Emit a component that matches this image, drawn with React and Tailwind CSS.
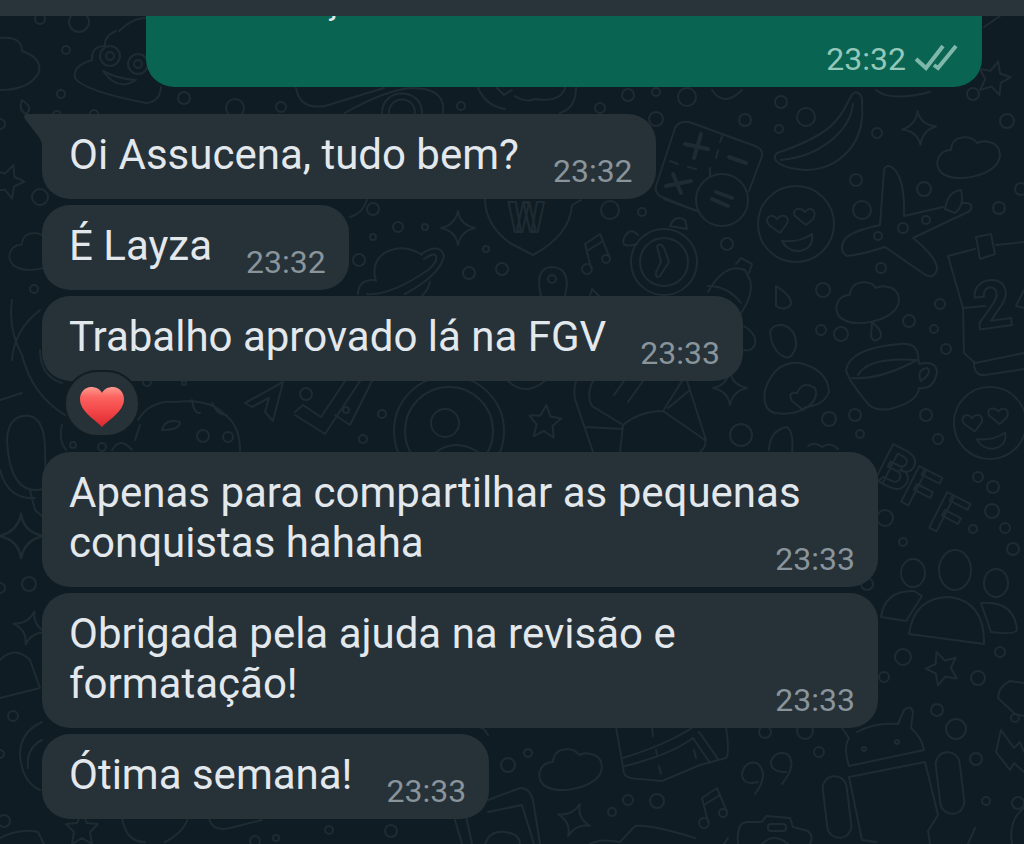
import React from 'react';

const messages = [
  { id: 1, text: 'Oi Assucena, tudo bem?', time: '23:32', tail: true },
  { id: 2, text: 'É Layza', time: '23:32' },
  { id: 3, text: 'Trabalho aprovado lá na FGV', time: '23:33', reaction: true },
  { id: 4, text: 'Apenas para compartilhar as pequenas conquistas hahaha', time: '23:33' },
  { id: 5, text: 'Obrigada pela ajuda na revisão e formatação!', time: '23:33' },
  { id: 6, text: 'Ótima semana!', time: '23:33' },
];

// x, y, radius
const bubbles = [
  [40, 19, 5], [79, 22, 10], [66, 50, 4], [61, 94, 4], [184, 98, 6], [235, 108, 9], [281, 107, 5], [40, 197, 8],
  [461, 106, 4], [94, 114, 4], [57, 115, 4], [0, 124, 5], [628, 95, 6], [656, 92, 4], [687, 97, 9], [600, 108, 5],
  [656, 119, 7], [745, 120, 6], [779, 129, 4], [781, 102, 6], [806, 117, 9], [877, 133, 5], [973, 94, 6],
  [1007, 121, 7], [856, 180, 6], [924, 189, 7], [862, 210, 9], [999, 208, 6], [610, 210, 9], [642, 212, 4],
  [1021, 189, 6], [903, 228, 5], [926, 220, 4], [878, 236, 4], [727, 244, 6], [881, 268, 5], [823, 290, 7],
  [940, 304, 5], [909, 321, 6], [821, 330, 5], [841, 334, 7], [934, 329, 4], [946, 349, 5], [829, 419, 7],
  [855, 415, 6], [860, 434, 4], [741, 435, 11], [926, 415, 6], [938, 439, 5], [978, 477, 5], [993, 487, 6],
  [992, 511, 7], [973, 529, 4], [1005, 528, 5], [885, 518, 8], [373, 209, 6], [398, 227, 5], [425, 227, 3],
  [373, 237, 3], [359, 260, 6], [469, 273, 6], [502, 269, 6], [486, 249, 3], [382, 414, 4], [363, 439, 4],
  [147, 382, 4], [184, 383, 2], [306, 394, 6], [346, 410, 3], [203, 436, 6], [228, 437, 5], [73, 445, 3],
  [102, 447, 4], [29, 584, 7], [0, 588, 5], [903, 542, 4], [1013, 549, 6], [867, 584, 6], [903, 657, 8],
  [1000, 652, 5], [884, 677, 5], [978, 678, 7], [937, 710, 6], [956, 729, 10], [765, 732, 6], [805, 731, 8],
  [819, 752, 5], [976, 759, 6], [986, 801, 4], [1018, 803, 6], [1015, 718, 4], [508, 765, 7], [528, 753, 4],
  [628, 800, 5], [657, 801, 7], [612, 812, 4], [13, 716, 5], [4, 821, 6], [0, 754, 4], [329, 830, 4],
  [391, 831, 6], [255, 841, 5], [276, 838, 3], [34, 289, 4],
];

const Star = ({ at }) => (
  <path transform={at} d="M0-16 5-5 16-4 8 4 10 16 0 10-10 16-8 4-16-4-5-5Z" />
);

const Sparkle = ({ at }) => (
  <path transform={at} d="M0-17Q2-3 17 0Q3 3 0 17Q-2 3-17 0Q-3-3 0-17Z" />
);

const Cloud = ({ at }) => (
  <path
    transform={at}
    d="M-18-6C-34-6-36 14-24 19C-10 26 16 20 26 10C34 2 32-12 20-14C16-15 12-15 8-13C2-22-14-20-17-11Q-18-8-18-6Z"
  />
);

const LoveFace = ({ at }) => (
  <g transform={at}>
    <circle r="38" />
    <path d="M-16 9-27 1C-33-6-24-12-19-5C-14-12-4-7-10 1Z" />
    <path d="M10 1-1-8C-5-15 4-18 9-12C14-19 22-13 17-5Z" />
    <path d="M-14 17Q3 19 16 10Q18 24 4 27Q-8 28-14 17Z" />
  </g>
);

const Note = ({ at }) => (
  <g transform={at}>
    <circle cx="-10" cy="15" r="5" />
    <circle cx="9" cy="5" r="4" />
    <path d="M-6 14-12-10 3-20 13 4M-10-3 6-13" />
  </g>
);

const Wallpaper = () => (
  <svg
    aria-hidden="true"
    className="pointer-events-none absolute inset-0 h-full w-full"
    viewBox="0 0 1024 844"
    preserveAspectRatio="xMinYMin slice"
    fill="none"
    stroke="#1f2b32"
    strokeWidth="2"
    strokeLinecap="round"
    strokeLinejoin="round"
  >
    {bubbles.map(([x, y, r]) => (
      <circle key={`${x}-${y}`} cx={x} cy={y} r={r} />
    ))}

    <Star at="translate(994 77) rotate(15)" />
    <Star at="translate(545 421) rotate(5)" />
    <Star at="translate(942 667) rotate(-20)" />
    <Star at="translate(8 180) rotate(20)" />
    <Star at="translate(82 828)" />
    <Sparkle at="translate(919 128) rotate(-5)" />
    <Sparkle at="translate(458 228)" />
    <Sparkle at="translate(730 388)" />
    <Sparkle at="translate(21 536) scale(1.3)" />
    <Sparkle at="translate(574 820) rotate(20)" />
    <Sparkle at="translate(30 628) rotate(15)" />
    <Cloud at="translate(969 156)" />
    <Cloud at="translate(868 301)" />
    <Cloud at="translate(571 768)" />
    <Cloud at="translate(38 250) scale(0.9)" />
    <LoveFace at="translate(796 224)" />
    <LoveFace at="translate(990 423) scale(0.95)" />
    <Note at="translate(597 254)" />
    <Note at="translate(714 808)" />

    {/* poop emoji and cloud, top left */}
    <path d="M0 38Q22 36 22 51Q42 58 39 72Q30 90 0 90" />
    <path d="M116 31Q104 36 105 46Q91 46 92 60Q72 66 75 78Q84 91 146 103Q160 102 161 87M119 31Q132 18 146 18" />
    <circle cx="110" cy="56" r="10" />
    <circle cx="110" cy="56" r="4" />
    <circle cx="138" cy="64" r="10" />
    <circle cx="138" cy="64" r="4" />
    <path d="M103 71Q118 79 136 80Q118 92 103 71Z" />
    <path d="M22 100Q34 108 26 114Q18 110 22 100Z" />

    {/* shapes peeking out under the sent message */}
    <path d="M296 88Q300 110 325 106L384 88M345 113Q385 90 412 88Q446 88 443 113M478 88Q486 106 505 109M497 88 504 95 512 90" />
    <path d="M382 113C382 87 422 87 422 113M389 113C389 95 415 95 415 113" />
    <path d="M515 96Q525 103 535 99Q560 103 565 88M576 88Q576 108 560 113M712 90Q724 108 742 90M876 90Q890 102 930 92M984 27 1000 16" />

    {/* calculator */}
    <path d="M692 123 755 146Q765 150 761 159L749 191M697 211 662 197Q653 193 657 183L675 128Q680 119 692 123" />
    <circle cx="722" cy="200" r="26" />
    <path d="M701 134 694 158M685 144 708 149M673 174 681 193M666 186 691 181M729 157 746 163M716 192 732 198M712 199 728 206" strokeWidth="4" />
    <path d="M723 134 720 142M718 150 716 158M710 168 710 176M670 161 678 164M688 167 696 169" />

    {/* banana */}
    <path d="M776 161Q772 153 783 151C830 134 840 120 850 98C856 86 863 95 862 104C866 150 830 175 797 169Q784 168 776 161ZM781 160C822 156 850 130 853 104" />

    {/* plane */}
    <path d="M880 225 884 170Q887 162 895 170Q905 182 904 216L943 207M963 203Q975 202 970 211L913 238Q938 258 937 270Q933 280 924 274L885 247Q860 255 847 256Q838 250 845 239Q852 231 880 225M945 209Q948 191 961 190Q965 205 955 213Z" />

    {/* calendar */}
    <path d="M975 249 948 256 963 308 964 353 975 363 1024 353M963 308 985 306M974 363Q974 376 985 375L1024 369M996 245 1024 242M976 237 991 234 995 254 980 259Z" />
    <path d="M1024 290 1016 306 1024 308" />
    <text
      x="977"
      y="330"
      transform="rotate(-8 977 330)"
      className="font-[Roboto,sans-serif] text-[66px] font-bold"
    >
      2
    </text>

    {/* clock and bulb */}
    <circle cx="664" cy="262" r="33" />
    <circle cx="664" cy="262" r="24" />
    <path d="M657 246Q661 242 664 248L669 262 660 276Q655 279 656 272L661 262Z" />
    <path d="M670 226Q675 214 685 220L687 229ZM637 244Q620 249 624 238Q630 226 638 235" />
    <path d="M708 292Q725 262 745 270L750 280Q754 294 741 313M708 286Q728 286 741 303M736 264 741 258 752 264 749 273" />
    <path d="M776 286Q792 296 791 304Q786 312 776 306ZM744 326Q757 334 755 344Q752 352 744 350M872 322Q884 332 880 338Q873 344 871 336Z" />

    {/* heart with letter */}
    <path d="M485 198Q485 225 510 243L533 255Q570 235 572 205L581 200M664 199 697 211" />
    <text x="508" y="232" className="font-[Roboto,sans-serif] text-[42px] font-black">
      W
    </text>

    {/* planet and pin */}
    <path d="M376 281Q370 262 386 252Q405 243 422 255M430 282Q428 290 422 296M358 294Q358 280 374 280M367 294Q390 296 428 270Q438 262 436 256Q434 252 424 259M421 254Q440 242 444 256Q440 275 405 294" />
    <path d="M541 296Q534 268 552 267Q572 268 565 296" />
    <circle cx="552" cy="279" r="4" />
    <path d="M350 217Q362 214 367 200M590 295 592 289 599 296" />

    {/* egg, muffin, cup */}
    <path d="M770 332Q772 324 783 325Q797 330 796 346Q792 360 785 357Q772 352 770 332ZM769 450Q770 430 787 427Q794 432 792 452M808 446Q815 441 822 447 830 441 838 449" />
    <path d="M775 413Q762 410 765 390Q775 360 800 363Q828 370 829 392Q824 405 806 407Q795 416 775 413ZM803 410 792 401Q787 391 797 393 803 380 815 388Q820 400 803 410Z" />
    <path d="M918 355Q916 342 900 344Q850 348 846 370Q848 380 869 405Q876 411 890 409Q918 402 919 388Q934 390 937 372Q936 360 919 364ZM852 378Q880 380 917 360M858 375Q868 357 916 360M921 381Q916 370 927 368Q933 372 921 381Z" />
    <text
      x="872 898 926"
      y="478 500 526"
      rotate="27"
      className="font-[Roboto,sans-serif] text-[56px] font-bold"
    >
      BFF
    </text>

    {/* record, envelope, paper plane, ticks */}
    <circle cx="449" cy="431" r="55" />
    <circle cx="449" cy="431" r="44" />
    <circle cx="445" cy="423" r="14" />
    <path d="M436 452Q456 438 478 452M508 381Q525 397 545 381M576 381Q572 395 577 405L593 452M593 381Q586 395 592 406L623 425 620 452M585 427 623 429M623 425Q640 411 663 411L705 440Q707 446 700 452M663 411 682 381M668 408 690 390M687 381 706 440M614 395 624 381M628 402 643 381" />
    <path d="M245 403 283 382 273 421 265 412 269 398 252 407ZM295 412 303 405 321 417 345 381M295 415 325 434 360 381M335 415 350 425 372 381" />

    {/* banana leaf, dog and mitten on the left edge */}
    <path d="M12 300Q8 330 22 355 32 395 65 415M40 310Q14 330 12 360M40 350Q40 376 62 383M0 400 22 393M7 440Q8 414 30 416Q45 420 45 450Q45 470 47 488Q10 500 7 440ZM0 470Q8 500 35 498M30 490 35 510 42 516" />
    <path d="M138 420Q150 400 175 402Q210 398 225 415Q240 425 240 451M192 400Q194 414 200 413M212 403Q218 416 227 415M162 430Q165 418 180 422Q180 430 162 430ZM135 440 140 425M62 425Q58 440 66 450M112 450Q120 436 132 450" />
    <path d="M0 660Q15 645 30 660L40 688 0 698M42 722Q20 732 20 755Q22 782 40 790M42 740Q26 748 28 768" />
    <path d="M122 818Q126 842 145 842M188 818Q184 832 165 842M209 818Q212 832 230 828L262 820M0 838Q20 828 38 832L44 844" />

    {/* people */}
    <ellipse cx="913" cy="573" rx="12" ry="14" />
    <ellipse cx="955" cy="570" rx="16" ry="20" />
    <ellipse cx="996" cy="583" rx="12" ry="14" />
    <path d="M909 634Q914 597 950 597Q985 602 984 644ZM881 617Q885 590 914 591L922 596 906 621ZM981 603Q1014 600 1017 630Q1015 635 991 632Z" />

    {/* robot */}
    <path d="M849 766Q843 748 849 738L842 728M857 732Q875 722 898 724L904 710Q911 704 913 712L911 728Q922 738 924 750L849 766" />
    <path d="M849 777 925 762 938 815 928 831M849 777 862 840 876 842M928 831 930 844" />
    <circle cx="864" cy="749" r="2" />
    <circle cx="897" cy="742" r="2" />
    <rect x="825" y="776" width="24" height="62" rx="12" transform="rotate(-7 837 807)" />
    <rect x="938" y="752" width="24" height="62" rx="12" transform="rotate(-7 950 783)" />
    <path d="M1024 683 1010 681Q998 687 998 698L1015 714 1024 716M1001 730 996 752 1010 770 1014 763 1024 772M1001 730 1014 748 1020 742 1024 752M1012 844Q1008 820 1024 808M968 844 975 828" />

    {/* parcel, quotes, camera */}
    <path d="M616 727 624 773Q626 779 640 779L662 781 700 765 726 758Q730 754 726 727M623 758Q665 745 692 728M625 766Q670 755 693 738L710 763M699 732 718 759M652 728 653 736M656 750 657 755M659 766 661 774M694 750 696 758" />
    <path d="M758 782Q742 786 742 773Q746 760 757 763Q770 774 755 794M786 772Q770 772 771 761Q776 750 787 754Q798 764 782 784" />
    <path d="M738 844Q736 824 746 822L762 822 766 816 790 818 793 827 808 831Q814 836 810 844M762 844Q774 832 788 844" />
    <rect x="768" y="824" width="18" height="7" rx="3" />
    <path d="M488 800 520 788Q530 788 533 800L540 844M488 812 522 805 534 844M455 820 462 844M466 816 472 844M485 844Q490 830 505 832 520 834 520 844M590 844Q600 838 620 842L635 826Q650 824 695 838M724 844 728 838M488 735Q484 727 478 727" />
  </svg>
);

const DoubleCheck = () => (
  <svg
    role="img"
    aria-label="Entregue"
    className="h-7 w-11"
    viewBox="0 0 44 28"
    fill="none"
    stroke="#7fb8aa"
    strokeWidth="4"
  >
    <path d="M2 14 12 23 29 1M20 20 24 23 42 1" />
  </svg>
);

const Heart = () => (
  <svg role="img" aria-label="Coração" className="h-10 w-[46px]" viewBox="0 0 46 40">
    <defs>
      <linearGradient id="heart" x1="0" y1="0" x2="0" y2="1">
        <stop offset="0" stopColor="#ff9a90" />
        <stop offset="0.25" stopColor="#fb6460" />
        <stop offset="0.6" stopColor="#f34648" />
        <stop offset="1" stopColor="#d92b30" />
      </linearGradient>
    </defs>
    <path
      fill="url(#heart)"
      d="M23 40C17 33 1 25 1 12C1 5 6 0 12 0C17 0 21 2 23 6C25 2 29 0 34 0C40 0 45 5 45 12C45 25 29 33 23 40Z"
    />
  </svg>
);

const Message = ({ text, time, tail, reaction }) => (
  <li className={reaction ? 'relative mb-[65px]' : 'relative'}>
    <div
      className={`w-fit max-w-[836px] flow-root bg-[#263138] pt-4 pr-[23px] pb-2.5 pl-[27px] ${
        tail ? 'rounded-[28px] rounded-tl-none' : 'rounded-[28px]'
      }`}
    >
      {tail && (
        <svg aria-hidden="true" className="absolute top-0 -left-[18px] h-8 w-[18px]" viewBox="0 0 18 32" fill="#263138">
          <path d="M18 0H2Q-1 1 1 5L14 22Q18 27 18 32Z" />
        </svg>
      )}
      <span className="text-[42px] leading-[50px] text-[#e3e8ed]">{text}</span>
      <time className="float-right mt-[23px] ml-[34px] text-[32px] leading-9 text-[#89949b]">{time}</time>
    </div>
    {reaction && (
      <button
        type="button"
        className="absolute -bottom-[56px] left-[22px] flex h-[67px] w-[76px] items-center justify-center rounded-full border-2 border-[#121d23] bg-[#263138] pt-1.5"
      >
        <Heart />
      </button>
    )}
  </li>
);

const App = () => {
  return (
    <div className="flex min-h-screen flex-col bg-[#101c23] font-[Roboto,sans-serif]">
      <header className="relative z-10 h-4 bg-[#29333a]" />
      <main className="relative flex-1 overflow-hidden pb-6">
        <div className="absolute inset-x-0 -top-4 bottom-0">
          <Wallpaper />
        </div>
        <div className="relative mr-[42px] ml-[146px] overflow-hidden rounded-b-[28px] bg-[#096451] pr-6 pb-2.5 pl-[27px]">
          <p className="-mt-[43px] pl-[147px] text-[42px] leading-[50px] text-[#e3e8ed]">ç</p>
          <div className="mt-[18px] flex items-center justify-end gap-2">
            <time className="text-[32px] leading-9 text-[#94c8bb]">23:32</time>
            <DoubleCheck />
          </div>
        </div>
        <ul className="relative mt-[27px] ml-[42px] flex flex-col gap-1.5">
          {messages.map((message) => (
            <Message key={message.id} {...message} />
          ))}
        </ul>
      </main>
    </div>
  );
};

export default App;
